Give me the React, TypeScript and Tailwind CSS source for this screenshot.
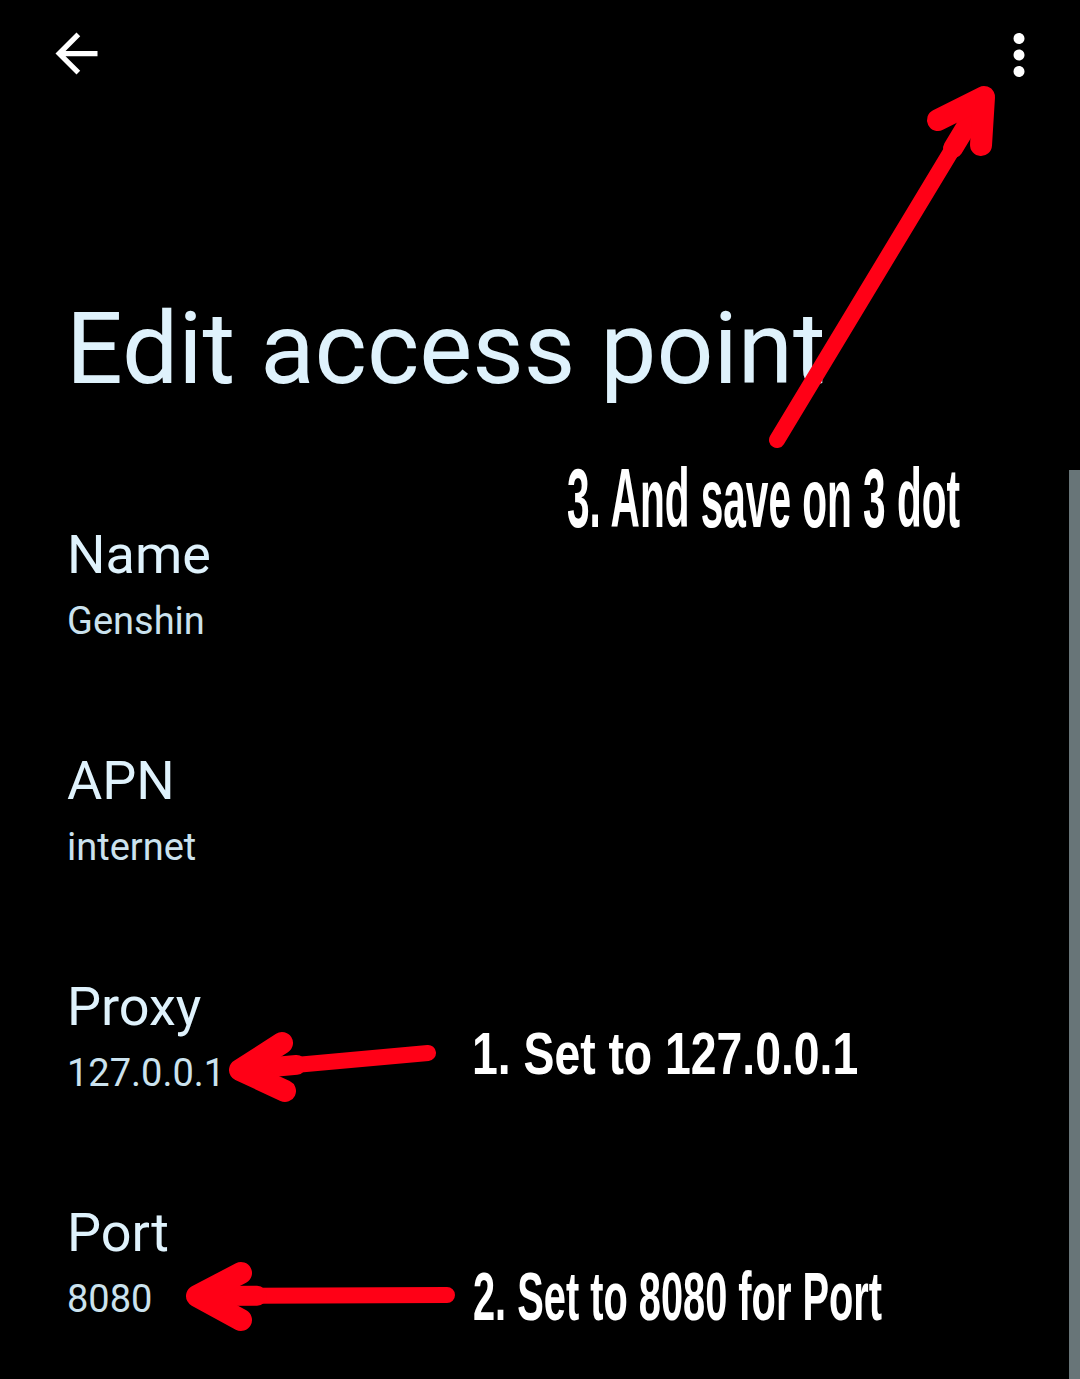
import React from 'react'

type Pt = [number, number]

const items = [
  { label: 'Name', value: 'Genshin' },
  { label: 'APN', value: 'internet' },
  { label: 'Proxy', value: '127.0.0.1' },
  { label: 'Port', value: '8080' },
]

// hand-drawn style red arrow: tapered shaft + thick chevron head
const Arrow = ({ tail, tip, b1, b2 }: { tail: Pt; tip: Pt; b1: Pt; b2: Pt }) => {
  const len = Math.hypot(tail[0] - tip[0], tail[1] - tip[1])
  const k = Math.min(0.3, 60 / len)
  const mid: Pt = [tip[0] + (tail[0] - tip[0]) * k, tip[1] + (tail[1] - tip[1]) * k]
  return (
    <g stroke="#ff0016" fill="none" strokeLinecap="round" strokeLinejoin="round">
      <line x1={tail[0]} y1={tail[1]} x2={tip[0]} y2={tip[1]} strokeWidth={16} />
      <line x1={mid[0]} y1={mid[1]} x2={tip[0]} y2={tip[1]} strokeWidth={20} />
      <polyline points={`${b1[0]},${b1[1]} ${tip[0]},${tip[1]} ${b2[0]},${b2[1]}`} strokeWidth={22} />
    </g>
  )
}

const App = () => {
  return (
    <div className="relative w-[1080px] h-[1379px] bg-black overflow-hidden font-['Roboto',sans-serif]">
      {/* Top bar */}
      <div className="flex justify-between items-start h-[110px] pt-[22px] pl-[45px] pr-[28px]">
        <svg width="63" height="63" viewBox="0 0 24 24" fill="#ffffff">
          <path d="M20 11H7.83l5.59-5.59L12 4l-8 8 8 8 1.41-1.41L7.83 13H20v-2z" />
        </svg>
        <svg width="66" height="66" viewBox="0 0 24 24" fill="#ffffff">
          <path d="M12 8c1.1 0 2-.9 2-2s-.9-2-2-2-2 .9-2 2 .9 2 2 2zm0 2c-1.1 0-2 .9-2 2s.9 2 2 2 2-.9 2-2-.9-2-2-2zm0 6c-1.1 0-2 .9-2 2s.9 2 2 2 2-.9 2-2-.9-2-2-2z" />
        </svg>
      </div>

      {/* Title */}
      <h1 className="pt-[189px] pl-[66px] text-[100px] leading-none font-normal text-[#dff2fc]">
        Edit access point
      </h1>

      {/* Fields */}
      <div className="flex flex-col gap-[114px] pt-[129px] pl-[67px]">
        {items.map((item) => (
          <div key={item.label} className="flex flex-col gap-[20px]">
            <div className="text-[54px] leading-none text-[#dff2fc]">{item.label}</div>
            <div className="text-[38px] leading-none text-[#cbe2ee]">{item.value}</div>
          </div>
        ))}
      </div>

      {/* Scrollbar */}
      <div className="absolute right-0 top-[470px] bottom-0 w-[11px] bg-[#687578]" />

      {/* Annotations */}
      <svg className="absolute inset-0 pointer-events-none" width="1080" height="1379">
        <Arrow tail={[777, 440]} tip={[984, 97]} b1={[938, 120]} b2={[981, 145]} />
        <Arrow tail={[428, 1053]} tip={[240, 1070]} b1={[282, 1043]} b2={[285, 1091]} />
        <Arrow tail={[447, 1295]} tip={[197, 1296]} b1={[241, 1273]} b2={[241, 1320]} />
      </svg>

      <div className="absolute left-[567px] top-[456px] text-[84px] leading-none font-bold text-white whitespace-nowrap origin-left scale-x-[0.483] font-['Liberation_Sans',sans-serif]">
        3. And save on 3 dot
      </div>
      <div className="absolute left-[472px] top-[1024px] text-[60px] leading-none font-bold text-white whitespace-nowrap origin-left scale-x-[0.772] font-['Liberation_Sans',sans-serif]">
        1. Set to 127.0.0.1
      </div>
      <div className="absolute left-[473px] top-[1262px] text-[68px] leading-none font-bold text-white whitespace-nowrap origin-left scale-x-[0.585] font-['Liberation_Sans',sans-serif]">
        2. Set to 8080 for Port
      </div>
    </div>
  )
}

export default App
